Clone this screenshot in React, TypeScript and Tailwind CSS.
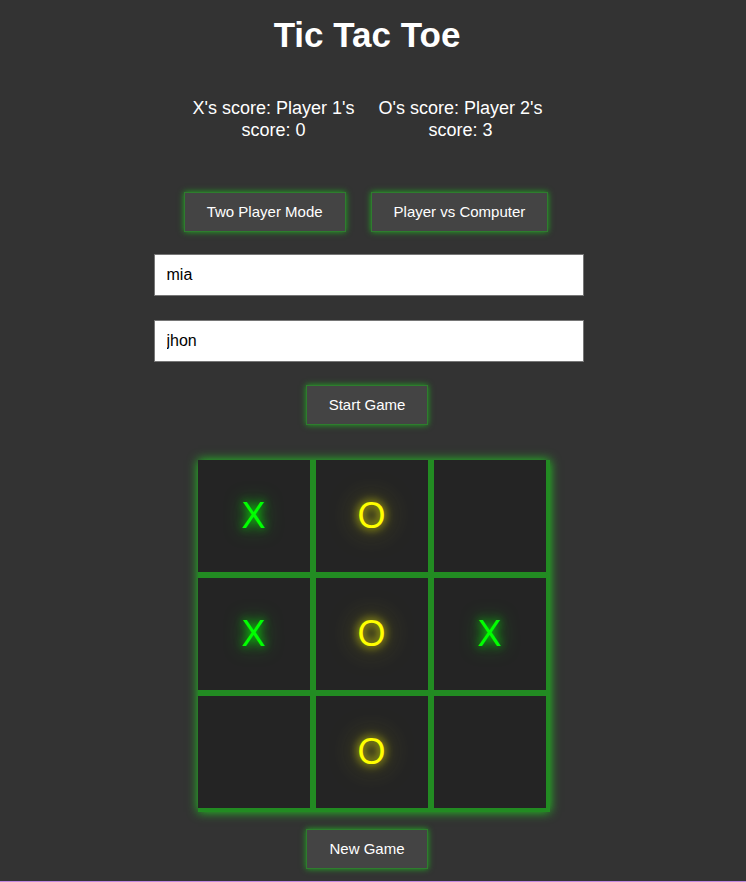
import { useState } from 'react'

type Mark = 'X' | 'O' | ''

const initialBoard: Mark[] = ['X', 'O', '', 'X', 'O', 'X', '', 'O', '']

const btn =
  'h-[40px] px-[22px] bg-[#444444] text-white text-[15px] border border-[#2e7d2e] shadow-[0_0_6px_#22aa22] cursor-pointer'

export default function App() {
  const [board] = useState<Mark[]>(initialBoard)
  const [p1, setP1] = useState('mia')
  const [p2, setP2] = useState('jhon')

  return (
    <div
      className="min-h-[882px] bg-[#333333] text-white flex flex-col"
      style={{ fontFamily: '"Liberation Sans", Arial, sans-serif' }}
    >
      <div className="flex flex-col items-center pr-[12px]">
        <h1 className="mt-[15px] text-[35px] leading-[40px] font-bold">Tic Tac Toe</h1>

        {/* scores */}
        <div className="mt-[43px] flex justify-center gap-[17px] text-[18px] leading-[21.6px] text-center">
          <p className="w-[170px]">X's score: Player 1's score: 0</p>
          <p className="w-[170px]">O's score: Player 2's score: 3</p>
        </div>

        <div className="mt-[51px] -ml-[2px] flex justify-center gap-[25px]">
          <button className={btn}>Two Player Mode</button>
          <button className={btn}>Player vs Computer</button>
        </div>

        <input
          value={p1}
          onChange={(e) => setP1(e.target.value)}
          className="mt-[22px] ml-[3px] w-[430px] h-[42px] px-[12px] bg-white text-black text-[16px] border border-[#767676] outline-none"
        />
        <input
          value={p2}
          onChange={(e) => setP2(e.target.value)}
          className="mt-[24px] ml-[3px] w-[430px] h-[42px] px-[12px] bg-white text-black text-[16px] border border-[#767676] outline-none"
        />

        <button className={`${btn} mt-[23px]`}>Start Game</button>

        {/* board */}
        <div className="mt-[35px] ml-[13px] grid grid-cols-[repeat(3,112px)] gap-[6px] bg-[#228b22] pr-[4px] pb-[4px] shadow-[0_0_10px_#22cc22]">
          {board.map((cell, i) => (
            <div
              key={i}
              className="w-[112px] h-[112px] bg-[#242424] flex items-center justify-center text-[36px]"
            >
              {cell === 'X' && (
                <span className="text-[#00ff00] [text-shadow:0_0_10px_#00ff00,0_0_20px_#00cc00]">X</span>
              )}
              {cell === 'O' && (
                <span className="text-[#ffff00] [text-shadow:0_0_10px_#ffff00,0_0_28px_#aaaa00]">O</span>
              )}
            </div>
          ))}
        </div>

        <button className={`${btn} mt-[17px]`}>New Game</button>
      </div>
      <div className="mt-[12px] h-[1px] bg-[#c488e0]" />
    </div>
  )
}
